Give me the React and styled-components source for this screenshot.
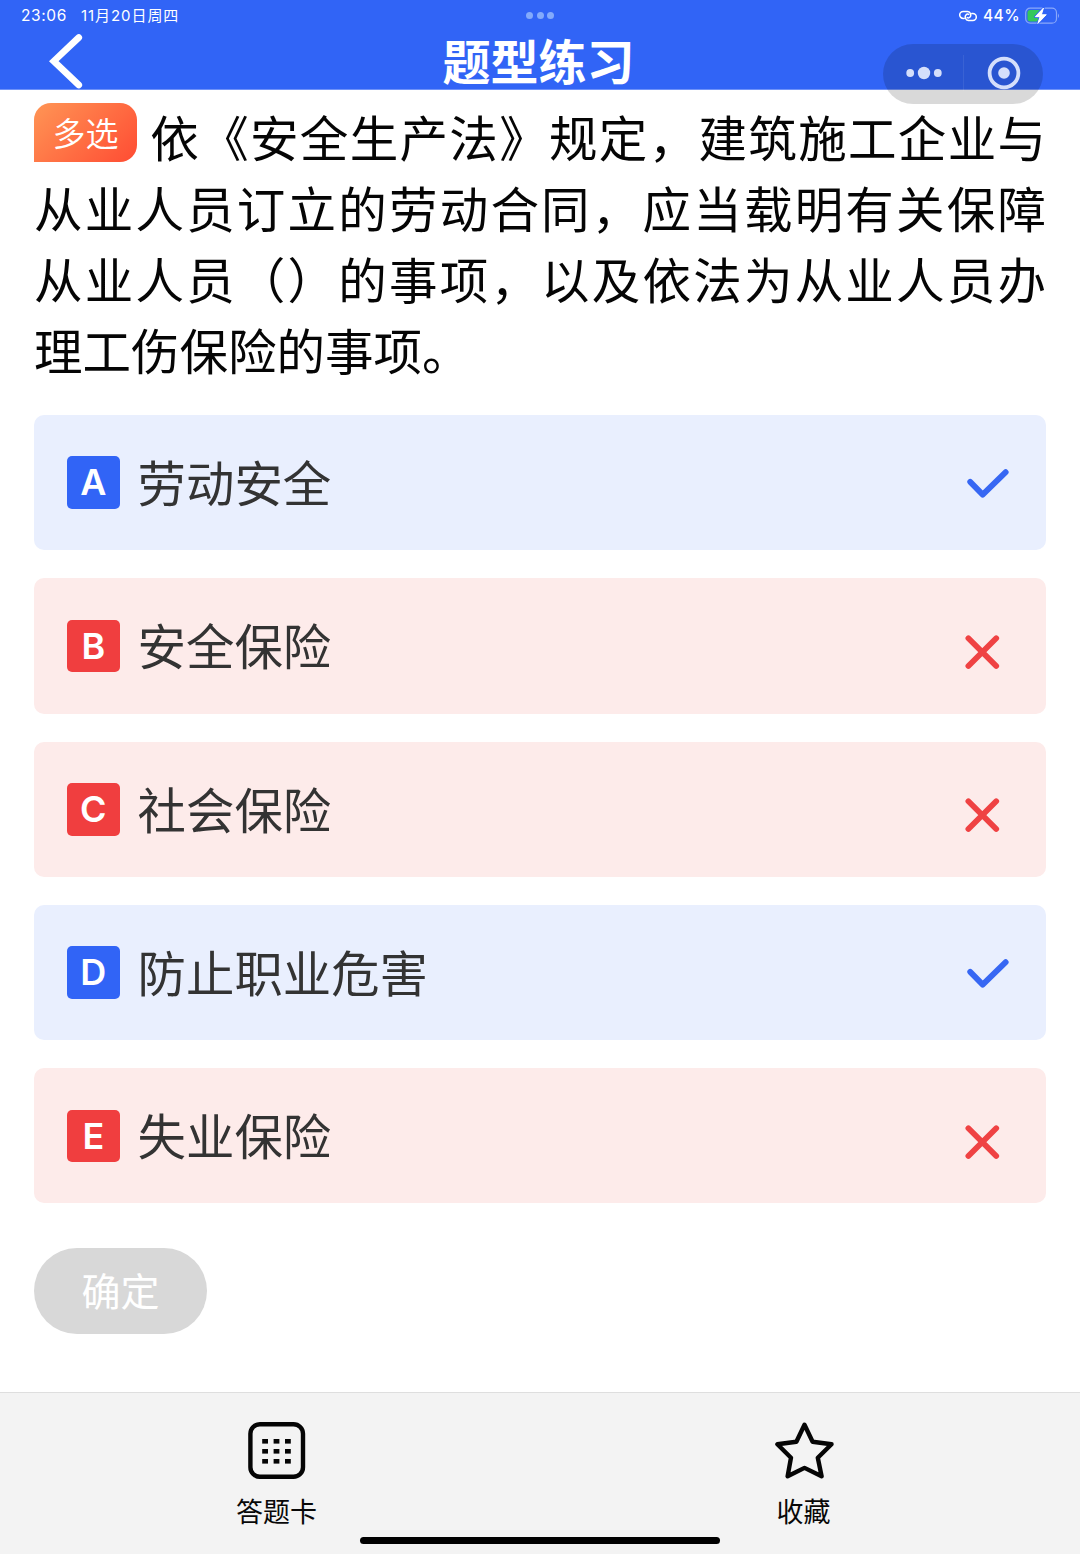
import React from 'react';
import styled, { createGlobalStyle } from 'styled-components';

const BLUE = '#3164f6';
const RED = '#f03e3f';

const GlobalStyle = createGlobalStyle`
  * { box-sizing: border-box; }
  body {
    margin: 0;
    background: #fff;
    font-family: 'Noto Sans CJK SC', sans-serif;
    text-spacing-trim: space-all;
  }
`;

const Page = styled.div`
  position: relative;
  display: flex;
  flex-direction: column;
  height: 1554px;
  overflow: hidden;
`;

const Header = styled.header`
  flex: none;
  height: 89.5px;
  border-bottom: 1px solid #6f92f9;
  background: ${BLUE};
  color: #fff;
`;

const StatusBar = styled.div`
  display: grid;
  grid-template-columns: 1fr auto 1fr;
  align-items: center;
  height: 31px;
  padding: 0 21px 0 21px;
  font-family: Inter, 'Noto Sans CJK SC', sans-serif;
  font-size: 15.5px;
  line-height: 20px;
`;

const StatusLeft = styled.div`
  display: flex;
  gap: 14px;
  letter-spacing: 0.6px;
  white-space: nowrap;
`;

const StatusDate = styled.span`
  font-size: 15px;
  letter-spacing: 0.95px;
`;

const StatusDots = styled.div`
  display: flex;
  gap: 3.5px;
`;

const StatusDot = styled.i`
  width: 7px;
  height: 7px;
  border-radius: 50%;
  background: #83aafb;
`;

const StatusRight = styled.div`
  display: flex;
  justify-content: flex-end;
  align-items: center;
  margin-right: -1px;
  letter-spacing: 0.4px;
`;

const Percent = styled.span`
  margin: 0 5px 0 6px;
  font-size: 15.5px;
  font-weight: 500;
`;

const TitleBar = styled.div`
  display: grid;
  grid-template-columns: 120px 1fr 120px;
  height: 58px;
`;

const BackButton = styled.button`
  display: flex;
  padding: 0 0 0 48px;
  border: 0;
  background: none;
`;

const Title = styled.h1`
  margin: 0;
  padding-right: 3px;
  text-align: center;
  font-size: 48px;
  font-weight: 700;
  line-height: 57px;
`;

const Capsule = styled.div`
  position: absolute;
  top: 44px;
  left: 883px;
  display: grid;
  grid-template-columns: 1fr 1px 1fr;
  align-items: center;
  justify-items: center;
  width: 160px;
  height: 60px;
  padding: 0 0 2px 1px;
  border-radius: 30px;
  background: rgba(0, 0, 0, 0.15);
`;

const CapsuleDivider = styled.span`
  width: 1px;
  height: 36px;
  background: rgba(255, 255, 255, 0.08);
`;

const Content = styled.main`
  flex: 1;
  padding: 13px 34px 0;
`;

const Question = styled.p`
  margin: 0;
  height: 312.5px;
  color: #050505;
  font-size: 48.5px;
  line-height: 71px;
  text-align: justify;
`;

const QuestionText = styled.span`
  position: relative;
  top: -1.5px;
`;

const TypeTag = styled.span`
  display: inline-block;
  width: 103px;
  height: 59px;
  margin-right: 12px;
  border-radius: 17px 17px 17px 0;
  background: linear-gradient(135deg, #ff9555 0%, #ff4c33 100%);
  color: #fff;
  font-size: 33px;
  font-weight: 350;
  line-height: 58px;
  text-align: center;
  text-align-last: center;
  vertical-align: top;
`;

const Options = styled.div`
  display: flex;
  flex-direction: column;
  gap: 28px;
`;

const Option = styled.div`
  display: flex;
  align-items: center;
  height: 135.3px;
  padding: 0 33px;
  border-radius: 10px;
  background: ${(p) => (p.$correct ? '#e9effe' : '#fdebea')};
`;

const Letter = styled.span`
  width: 52.6px;
  height: 52.6px;
  border-radius: 5px;
  background: ${(p) => (p.$correct ? BLUE : RED)};
  color: #fff;
  font-family: Inter, sans-serif;
  font-size: 36px;
  font-weight: 600;
  line-height: 53px;
  text-align: center;
`;

const OptionText = styled.span`
  flex: 1;
  margin-left: 18px;
  padding-bottom: 3px;
  color: #333;
  font-size: 48.4px;
  line-height: 68px;
`;

const Confirm = styled.button`
  display: block;
  width: 173px;
  height: 86px;
  margin-top: 45px;
  padding: 0 0 4px;
  border: 0;
  border-radius: 43px;
  background: #d8d8d8;
  color: #fff;
  font-family: inherit;
  font-size: 39px;
  line-height: 82px;
`;

const BottomBar = styled.nav`
  flex: none;
  display: flex;
  gap: 446px;
  height: 162px;
  padding: 29px 0 0 236px;
  border-top: 1px solid #dedede;
  background: #f3f3f3;
`;

const Tab = styled.div`
  display: flex;
  flex-direction: column;
  align-items: center;
  width: 81px;
  color: #080808;
  font-size: 27px;
  line-height: 40px;
`;

const TabLabel = styled.span`
  margin-top: 11px;
`;

const HomeIndicator = styled.div`
  position: absolute;
  left: 360px;
  bottom: 10px;
  width: 360px;
  height: 7px;
  border-radius: 4px;
  background: #000;
`;

const LinkIcon = () => (
  <svg width="18" height="12" viewBox="0 0 18 12" fill="none" stroke="#fff" strokeWidth="1.5" strokeLinecap="round">
    <path d="M5.2 8.4H4.2A3.5 3.5 0 0 1 4.2 1.4H8.6A3.5 3.5 0 0 1 10.8 7.3Q9.8 8.3 8.3 7.6" />
    <path d="M12.8 3.6H13.8A3.5 3.5 0 0 1 13.8 10.6H9.4A3.5 3.5 0 0 1 7.2 4.7Q8.2 3.7 9.7 4.4" />
  </svg>
);

const BatteryIcon = () => (
  <svg width="35" height="18" viewBox="0 0 35 18">
    <rect x="0.7" y="1.2" width="30.8" height="15" rx="4.5" fill="none" stroke="#8aa8fa" strokeWidth="1.2" />
    <path d="M33 6.4Q35 8.7 33 11Z" fill="#8aa8fa" />
    <path d="M5.2 3H15L9.5 10H14L12.8 14.5H5.2Q2.5 14.5 2.5 11.8V5.7Q2.5 3 5.2 3Z" fill="#35c85b" />
    <path
      d="M18.5 1L10.3 9.7H15L12.8 16.5L21.3 7.7H16.4Z"
      fill="#fff"
      stroke={BLUE}
      strokeWidth="2.4"
      strokeLinejoin="round"
      paintOrder="stroke"
    />
    <path d="M18.5 1L10.3 9.7H15L12.8 16.5L21.3 7.7H16.4Z" fill="#fff" stroke="#fff" strokeWidth="0.8" strokeLinejoin="round" />
  </svg>
);

const BackIcon = () => (
  <svg width="36" height="58" viewBox="0 0 36 58" fill="none" stroke="#fff" strokeWidth="6.6" strokeLinecap="round">
    <path d="M30.8 6.5L5.8 30.2L30.8 54" />
  </svg>
);

const MoreIcon = () => (
  <svg width="36" height="14" viewBox="0 0 36 14" fill="#d5dffb">
    <circle cx="4.2" cy="7" r="3.9" />
    <circle cx="18" cy="7" r="6.2" />
    <circle cx="31.8" cy="7" r="3.9" />
  </svg>
);

const TargetIcon = () => (
  <svg width="34" height="34" viewBox="0 0 34 34">
    <circle cx="17" cy="17" r="14.4" fill="none" stroke="#d5dffb" strokeWidth="3.8" />
    <circle cx="17" cy="17" r="5.8" fill="#d5dffb" />
  </svg>
);

const ResultIcon = ({ correct }) => (
  <svg width="50" height="50" viewBox="0 0 50 50" fill="none" strokeWidth="5.8" strokeLinecap="round" strokeLinejoin="round" stroke={correct ? '#3767f3' : '#ef4243'}>
    <path d={correct ? 'M7.2 23.9L19.7 36.6L42.7 14.2' : 'M5.4 17.3L33.2 45M33.2 17.3L5.4 45'} />
  </svg>
);

const CardIcon = () => (
  <svg width="58" height="58" viewBox="0 0 58 58">
    <rect x="2.4" y="2.2" width="52.6" height="52.6" rx="9.5" fill="none" stroke="#050505" strokeWidth="4.4" />
    {[17, 27, 37].map((y) => [14.2, 25.6, 37].map((x) => (
      <rect key={`${x}-${y}`} x={x} y={y} width="5.8" height="4.6" fill="#050505" />
    )))}
  </svg>
);

const StarIcon = () => (
  <svg width="60" height="58" viewBox="0 0 60 58" fill="none" stroke="#050505" strokeWidth="4.4" strokeLinejoin="round">
    <path d="M30.5 2.8L38.6 19.8L57.5 22.3L43.8 35.7L47.6 54.3L30.5 45.9L13.6 54.3L17 35.7L3.4 22.3L22.4 19.8Z" />
  </svg>
);

const options = [
  { letter: 'A', text: '劳动安全', correct: true },
  { letter: 'B', text: '安全保险', correct: false },
  { letter: 'C', text: '社会保险', correct: false },
  { letter: 'D', text: '防止职业危害', correct: true },
  { letter: 'E', text: '失业保险', correct: false },
];

export default function App() {
  return (
    <Page lang="zh-CN">
      <GlobalStyle />
      <Header>
        <StatusBar>
          <StatusLeft>
            <span>23:06</span>
            <StatusDate>11月20日周四</StatusDate>
          </StatusLeft>
          <StatusDots>
            <StatusDot />
            <StatusDot />
            <StatusDot />
          </StatusDots>
          <StatusRight>
            <LinkIcon />
            <Percent>44%</Percent>
            <BatteryIcon />
          </StatusRight>
        </StatusBar>
        <TitleBar>
          <BackButton aria-label="返回"><BackIcon /></BackButton>
          <Title>题型练习</Title>
        </TitleBar>
      </Header>
      <Capsule>
        <MoreIcon />
        <CapsuleDivider />
        <TargetIcon />
      </Capsule>
      <Content>
        <Question>
          <TypeTag>多选</TypeTag>
          <QuestionText>
            依《安全生产法》规定，建筑施工企业与从业人员订立的劳动合同，应当载明有关保障从业人员（）的事项，以及依法为从业人员办理工伤保险的事项。
          </QuestionText>
        </Question>
        <Options>
          {options.map((o) => (
            <Option key={o.letter} $correct={o.correct}>
              <Letter $correct={o.correct}>{o.letter}</Letter>
              <OptionText>{o.text}</OptionText>
              <ResultIcon correct={o.correct} />
            </Option>
          ))}
        </Options>
        <Confirm>确定</Confirm>
      </Content>
      <BottomBar>
        <Tab>
          <CardIcon />
          <TabLabel>答题卡</TabLabel>
        </Tab>
        <Tab>
          <StarIcon />
          <TabLabel>收藏</TabLabel>
        </Tab>
      </BottomBar>
      <HomeIndicator />
    </Page>
  );
}
